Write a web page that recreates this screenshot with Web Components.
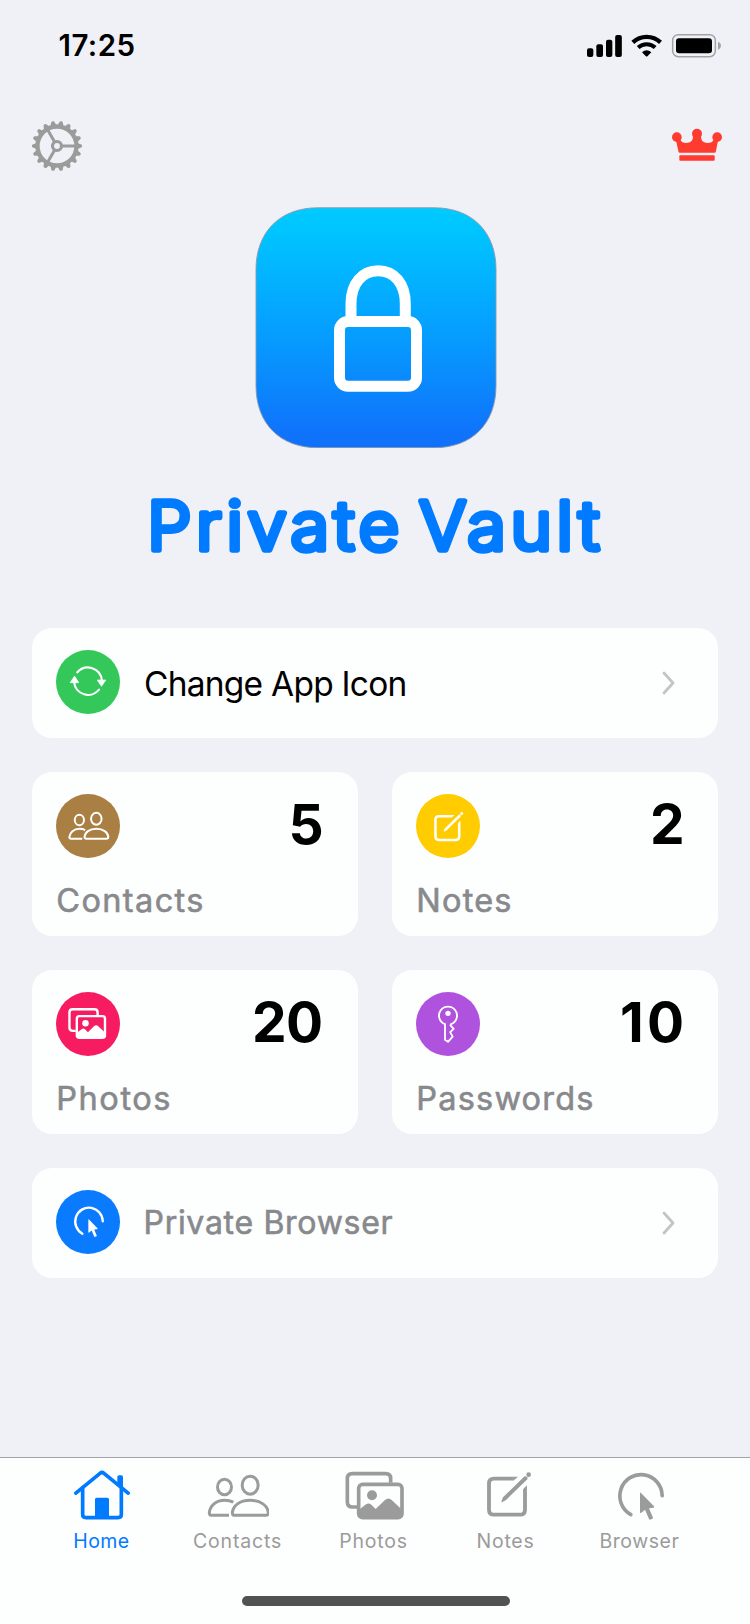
<!DOCTYPE html>
<html lang="en">
<head>
<meta charset="utf-8">
<title>Private Vault</title>
<style>
html,body{margin:0;padding:0;background:#f0f1f6;font-family:Inter,"Liberation Sans",sans-serif;color:#000}
body{width:750px;height:1624px;overflow:hidden}
</style>
</head>
<body>
<vault-app></vault-app>
<script>
const FAMILY = 'Inter, "Liberation Sans", sans-serif';
const pen = document.createElement('canvas').getContext('2d');
// Letter spacing and start offset that make the ink of a text span the given width.
function fitInk(text, weight, size, width) {
  pen.font = `${weight} ${size}px ${FAMILY}`;
  const m = pen.measureText(text);
  const ink = m.actualBoundingBoxRight + m.actualBoundingBoxLeft;
  return { spacing: (width - ink) / Math.max(1, text.length - 1), start: m.actualBoundingBoxLeft };
}

// Line art, drawn three units to a pixel. c is the centre of each drawing.
const ART = {
  home: { c: [156, 136], d: `
    <g fill="none" stroke="currentColor" stroke-width="11" stroke-linecap="round" stroke-linejoin="round">
      <path d="M77.5 130.5 150 71Q156 66 162 71L234.5 130.5"/>
      <path d="M98 114V194Q98 204 108 204H204Q214 204 214 194V114"/>
    </g>
    <path fill="currentColor" d="M202 104V82Q202 77 207 77H214Q219 77 219 82V118ZM135 205V149Q135 144 140 144H172Q177 144 177 149V205Z"/>` },
  contacts: { c: [566.5, 138.5], d: `
    <g fill="none" stroke="currentColor" stroke-width="9">
      <ellipse cx="523.5" cy="112" rx="21" ry="23.5"/>
      <ellipse cx="600.5" cy="106.5" rx="24" ry="27"/>
      <path d="M555 197H647Q655 197 655 189C653 168 632 152 600.5 152S549 168 547 189Q547 197 555 197Z"/>
      <path d="M537 197H486Q478 197 478 189C480 168 498 152 524 152Q539 152 550 157.500"/>
    </g>` },
  photos: { c: [974.5, 138], d: `
    <g fill="none" stroke="currentColor" stroke-width="11">
      <path d="M921 172H907Q892 172 892 157V87Q892 72 907 72H1007Q1022 72 1022 87V99"/>
      <rect x="926" y="104" width="130" height="100" rx="12"/>
    </g>
    <circle cx="966" cy="137" r="15" fill="currentColor"/>
    <path fill="currentColor" d="M926 181 948 164Q956 158 964 165L977 178 1005 151Q1015 142 1025 151L1057 181V202H926Z"/>` },
  notes: { c: [327, 134], d: `
    <path fill="none" stroke="currentColor" stroke-width="11.500" d="M341 87H282Q267 87 267 102V180Q267 195 282 195H360Q375 195 375 180V120"/>
    <path fill="currentColor" d="M340 81.300H354L341 92.700H340ZM380.700 107V121H369.300V119Z
      M304 156 309 143 373 80.500Q377 78 380.500 81.500T382 89L318 151 306 157.500Z"/>
    <circle cx="386" cy="75" r="7" fill="currentColor"/>` },
  browser: { c: [723, 138], d: `
    <path fill="none" stroke="currentColor" stroke-width="11" stroke-linecap="round" d="M786.500 138A63.500 64 0 1 0 692.500 195"/>
    <path fill="currentColor" d="M720 131Q720 127 723 130L762 170Q765 174 760 174.500L747 176 759 204Q759.500 206 757 207L750 210Q748 210.500 747 208L735 180 724 189.500Q720 192 720 187Z"/>` },
  refresh: { c: [204, 183.500], s: 1, d: `
    <g fill="none" stroke="currentColor" stroke-width="6.500" stroke-linecap="round">
      <path d="M172 157A42 42 0 0 1 245.500 181"/><path d="M237 209A42 42 0 0 1 162.500 187"/>
    </g>
    <path fill="currentColor" stroke="currentColor" stroke-width="2" stroke-linejoin="round" d="M231.500 180H257.500L244.500 199ZM150.500 188H176.500L163.500 168Z"/>` },
  key: { c: [204, 193.500], s: 1, d: `
    <path fill="none" stroke="currentColor" stroke-width="5.500" stroke-linejoin="round" d="M195 239V192.500A27 27 0 1 1 213 192.500L211.500 196 221 206.500 210.500 216.500 218 230 204 245.500Z"/>
    <circle cx="204" cy="160" r="8" fill="currentColor"/>` }
};

function define(name, render) {
  customElements.define(name, class extends HTMLElement {
    connectedCallback() {
      if (this.shadowRoot) return;
      this.attachShadow({ mode: 'open' }).innerHTML = render(this);
    }
  });
}

// The line height equals the cap height, so the box is exactly as tall as the capitals.
define('ink-label', el => {
  const size = +el.getAttribute('size'), weight = el.getAttribute('weight') || 400, width = +el.getAttribute('ink');
  const f = fitInk(el.textContent, weight, size, width);
  return `<style>
    :host{display:block;flex:none;width:${width}px;white-space:nowrap;font:${weight} ${size}px/.7273 ${FAMILY}}
    span{display:block;margin-left:${f.start}px;letter-spacing:${f.spacing}px;-webkit-text-stroke:${el.getAttribute('soft') || 0}px currentColor}
  </style><span><slot></slot></span>`;
});

define('round-badge', el => {
  const a = ART[el.getAttribute('icon')], k = a.s || +el.getAttribute('scale') || .66;
  const x = 96 + (+el.getAttribute('dx') || 0), y = 96 + (+el.getAttribute('dy') || 0);
  return `<style>
    :host{display:block;flex:none;width:64px;height:64px;border-radius:50%;background:${el.getAttribute('color')};color:#fff}
    svg{display:block}
  </style><svg width="64" height="64" viewBox="0 0 192 192"><g transform="translate(${x} ${y}) scale(${k}) translate(${-a.c[0]} ${-a.c[1]})">${a.d}</g></svg>`;
});

define('status-bar', () => `<style>
    :host{display:flex;justify-content:space-between;align-items:flex-start;box-sizing:border-box;height:121px;padding:33px 28px 0 59.500px}
    ink-label{margin-top:2px}
    svg{display:block}
  </style>
  <ink-label size="29.5" weight="600" ink="75">17:25</ink-label>
  <svg width="136" height="25" viewBox="78 99 408 75">
    <rect x="81" y="145" width="19" height="26" rx="6"/><rect x="109" y="133" width="20" height="38" rx="6"/>
    <rect x="138" y="119" width="19" height="52" rx="6"/><rect x="165.500" y="105" width="20" height="66" rx="6"/>
    <g fill="none" stroke="#000"><path stroke-width="13" d="M218.500 127A61 61 0 0 1 301.500 127"/><path stroke-width="12" d="M234.500 142.500A38 38 0 0 1 285.500 142.500"/></g>
    <path d="M246 157Q260 145 274 157L263 168Q260 171 257 168Z"/>
    <rect x="338" y="104" width="128" height="66" rx="17" fill="none" stroke="#a1a2a6" stroke-width="4.500"/>
    <rect x="348" y="115" width="108" height="45" rx="9"/>
    <path fill="#a1a2a6" d="M474 125Q483 129 483 137.500T474 150Z"/>
  </svg>`);

define('top-actions', () => {
  let teeth = '';
  for (let a = 0; a < 360; a += 20) teeth += `<path transform="rotate(${a})" d="M58 -10 71 -5.500Q75.500 -4.500 75.500 0T71 5.500L58 10Z"/>`;
  return `<style>
    :host{display:flex;justify-content:space-between;align-items:center;height:50px;padding:0 28px 0 32px}
    svg{display:block}
  </style>
  <svg width="50" height="50" viewBox="-75 -75 150 150" fill="#9b9b9b">${teeth}
    <g fill="none" stroke="#9b9b9b"><circle r="58.500" stroke-width="13"/><circle r="13.500" stroke-width="9.500"/>
    <path stroke-width="9" d="M15 0H57M-7.500 -13-29 -50M-7.500 13-29 50"/></g>
  </svg>
  <svg width="50" height="36" viewBox="336 385 150 108" fill="#ff3b30">
    <circle cx="350.500" cy="412.500" r="14.500"/><circle cx="411" cy="402" r="15"/><circle cx="471.500" cy="412.500" r="14.500"/>
    <path d="M347 418H360C364 427 370 430 379 430C391 430 399 424 399 410H423C423 424 431 430 443 430C452 430 458 427 462 418H475L467.500 456Q467 459 464 459H359Q356 459 355.500 456Z"/>
    <rect x="358" y="467" width="106" height="16" rx="3"/>
  </svg>`;
});

define('app-hero', () => {
  const stretch = 1.05, gap = -8.5;
  const f = fitInk('Private Vault', 300, 67, 445 / stretch - gap);
  return `<style>
    :host{display:flex;flex-direction:column;align-items:center;padding-top:36px}
    svg{display:block}
    .icon{margin-left:2px}
    text{font:300 67px ${FAMILY};letter-spacing:${f.spacing}px;word-spacing:${gap}px}
  </style>
  <svg class="icon" width="242" height="241" viewBox="-1 -.75 242 241">
    <defs><linearGradient id="g" x1="0" y1="0" x2="0" y2="1"><stop offset="0" stop-color="#00caff"/><stop offset=".1" stop-color="#00c4ff"/><stop offset=".5" stop-color="#05a0ff"/><stop offset=".92" stop-color="#0f75fb"/><stop offset="1" stop-color="#1070fa"/></linearGradient></defs>
    <path fill="url(#g)" stroke="#8c9aa8" stroke-width=".9" d="M0 62C0 24 24 0 62 0H178C216 0 240 24 240 62V178C240 216 216 240 178 240H62C24 240 0 216 0 178Z"/>
    <g fill="none" stroke="#fff" stroke-width="11"><rect x="83.500" y="113.800" width="77" height="64.700" rx="8.500"/>
    <path d="M95 114V96C95 76 106 63 122.200 63S149.300 76 149.300 96V114"/></g>
  </svg>
  <svg width="750" height="180" viewBox="0 448 750 180">
    <text transform="translate(${153.6 + f.start * stretch} 549.6) scale(${stretch} 1.01)" fill="#007aff" stroke="#007aff" stroke-width="5.500" stroke-linejoin="round" stroke-linecap="round">Private Vault</text>
  </svg>`;
});

define('link-card', () => `<style>
    :host{display:flex;align-items:center;box-sizing:border-box;height:110px;padding:0 43px 0 24px;border-radius:20px;background:#fdfefe}
    .text{flex:1;padding-left:var(--indent,25px);padding-top:var(--drop,0px)}
    ::slotted(round-badge){margin-bottom:2px}
    svg{display:block}
  </style>
  <slot name="badge"></slot><div class="text"><slot></slot></div>
  <svg width="14" height="26" viewBox="-1 -1 14 26"><path d="M2 2 11 12 2 22" fill="none" stroke="#c4c4c7" stroke-width="2.800" stroke-linecap="round" stroke-linejoin="round"/></svg>`);

define('stat-card', () => `<style>
    :host{display:flex;flex-direction:column;justify-content:space-between;box-sizing:border-box;height:164px;padding:22px 36px 23.500px 24px;border-radius:20px;background:#fdfefe}
    .row{display:flex;justify-content:space-between;align-items:flex-start}
    .count{padding-top:9.500px}
    .name{color:#88898c;padding-left:var(--start,2.300px)}
  </style>
  <div class="row"><slot name="badge"></slot><div class="count"><slot name="count"></slot></div></div>
  <div class="name"><slot></slot></div>`);

define('tab-item', el => {
  const a = ART[el.getAttribute('icon')];
  return `<style>
    :host{display:flex;flex-direction:column;align-items:center;color:#9b9b9b}
    :host([selected]){color:#007aff}
    svg{display:block;margin-bottom:13px}
    ::slotted(*){margin-left:1px}
  </style>
  <svg width="64" height="51" viewBox="${+el.getAttribute('axis') - 96} 61 192 153">${a.d}</svg><slot></slot>`;
});

define('tab-bar', () => `<style>
    :host{display:flex;flex-direction:column;align-items:center;box-sizing:border-box;height:167px;border-top:1px solid #a3a3a8;background:#fdfefe;padding-top:12px}
    nav{display:grid;grid-template-columns:136px 136px 136px 128px 140px;width:750px;box-sizing:border-box;padding-left:33px;height:126px}
    .handle{width:268px;height:10px;border-radius:5px;background:#525252;margin-left:2px}
  </style>
  <nav>
    <tab-item icon="home" axis="153" selected><ink-label size="19.5" ink="54.5">Home</ink-label></tab-item>
    <tab-item icon="contacts" axis="561"><ink-label size="19.5" ink="87">Contacts</ink-label></tab-item>
    <tab-item icon="photos" axis="969"><ink-label size="19.5" ink="66.5">Photos</ink-label></tab-item>
    <tab-item icon="notes" axis="315"><ink-label size="19.5" ink="56">Notes</ink-label></tab-item>
    <tab-item icon="browser" axis="717"><ink-label size="19.5" ink="78">Browser</ink-label></tab-item>
  </nav>
  <div class="handle"></div>`);

define('vault-app', () => `<style>
    :host{display:flex;flex-direction:column;width:750px;height:1624px;background:#f0f1f6}
    main{display:grid;grid-template-columns:1fr 1fr;gap:34px;padding:0 32px}
    link-card{grid-column:1/-1}
    .muted{color:#88898c;--indent:25.500px;--drop:0px}
    .first{--indent:25px;--drop:2px}
    .curved{--start:1.300px}
    .inset{margin-right:1px}
    tab-bar{margin-top:auto}
  </style>
  <status-bar></status-bar>
  <top-actions></top-actions>
  <app-hero></app-hero>
  <main>
    <link-card class="first"><round-badge slot="badge" icon="refresh" color="#34c759" dy="-2.5"></round-badge><ink-label size="33.5" ink="260.5">Change App Icon</ink-label></link-card>
    <stat-card class="curved"><round-badge slot="badge" icon="contacts" color="#a97f43" dx="2.5" dy="-.5"></round-badge><ink-label slot="count" size="55" weight="700" ink="30.5">5</ink-label><ink-label size="32.5" ink="145" soft=".6">Contacts</ink-label></stat-card>
    <stat-card><round-badge slot="badge" icon="notes" color="#ffcc00" dx="2" dy="1.5"></round-badge><ink-label slot="count" size="55" weight="700" ink="30">2</ink-label><ink-label size="32.5" ink="92" soft=".6">Notes</ink-label></stat-card>
    <stat-card><round-badge slot="badge" icon="photos" color="#f71c62" dx="-2" dy="-1.5" scale=".65"></round-badge><ink-label slot="count" class="inset" size="55" weight="700" ink="67">20</ink-label><ink-label size="32.5" ink="111" soft=".6">Photos</ink-label></stat-card>
    <stat-card><round-badge slot="badge" icon="key" color="#af52de" dy="1.5"></round-badge><ink-label slot="count" size="55" weight="700" ink="60">10</ink-label><ink-label size="32.5" ink="174" soft=".6">Passwords</ink-label></stat-card>
    <link-card class="muted"><round-badge slot="badge" icon="browser" color="#0a7aff" dx="3" dy="-2" scale=".65"></round-badge><ink-label size="32" ink="247" soft=".6">Private Browser</ink-label></link-card>
  </main>
  <tab-bar></tab-bar>`);
</script>
</body>
</html>
